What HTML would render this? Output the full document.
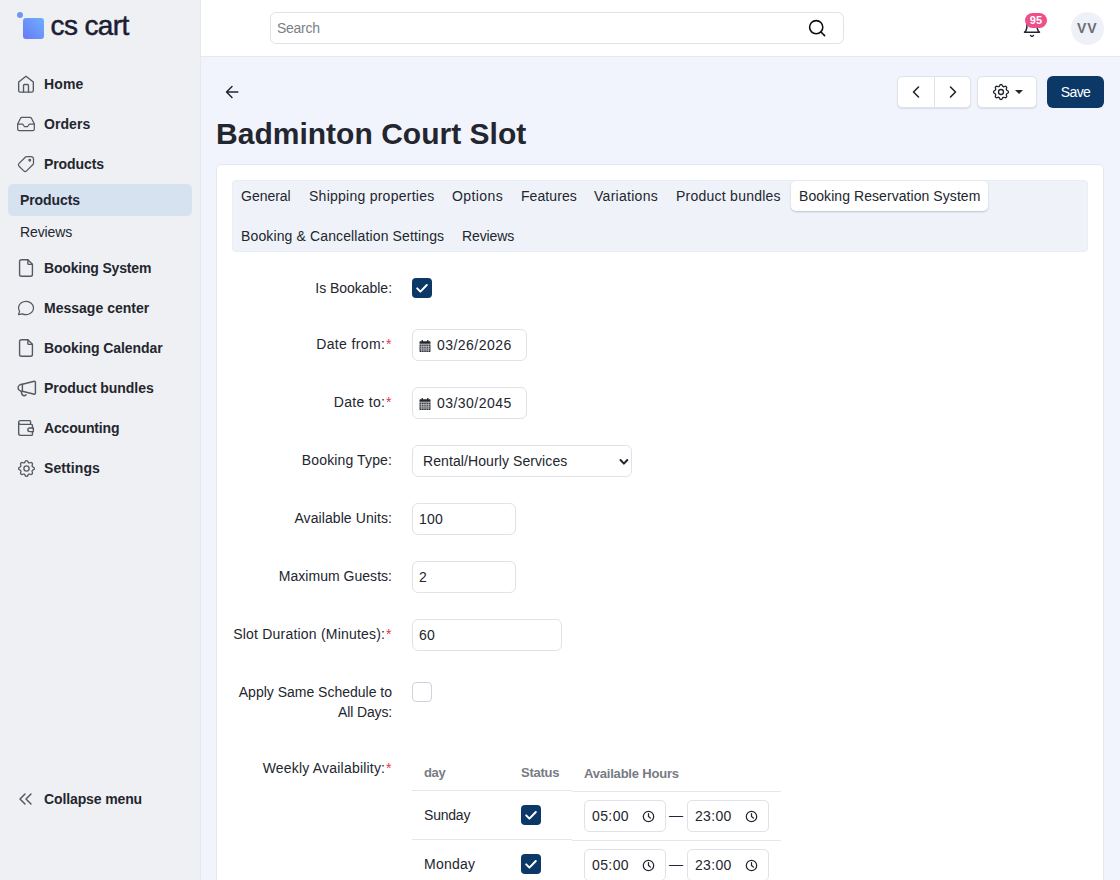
<!DOCTYPE html>
<html lang="en"><head>
<meta charset="utf-8">
<title>Badminton Court Slot</title>
<style>
:root{--f:"Liberation Sans",sans-serif;}
*{box-sizing:border-box;margin:0;padding:0}
html,body{width:1120px;height:880px;overflow:hidden}
body{font-family:var(--f);font-size:14px;color:#1f2430;background:#f1f4fc;position:relative}
.abs{position:absolute;white-space:nowrap}
/* sidebar */
#side{position:absolute;left:0;top:0;width:201px;height:880px;background:#eff0f3;border-right:1px solid #e6e8ed}
#logo-dot{position:absolute;left:17px;top:11.5px;width:6px;height:6px;border-radius:50%;background:#6f97f6}
#logo-sq{position:absolute;left:23px;top:18px;width:21px;height:20.5px;border-radius:3px;background:linear-gradient(45deg,#6b78f8,#6bb1fc)}
#logo-t{position:absolute;left:50.5px;top:8.5px;font-size:28px;line-height:34px;color:#1b1e33;white-space:nowrap;-webkit-text-stroke:0.5px #1b1e33}
.mi{position:absolute;left:44px;font-weight:bold;font-size:14px;line-height:20px;color:#23262e;white-space:nowrap}
.ms{position:absolute;left:20px;font-size:14px;line-height:20px;color:#23262e;white-space:nowrap}
.ic{position:absolute;left:16px;width:20px;height:20px;fill:none;stroke:#555960;stroke-width:1.5;stroke-linecap:round;stroke-linejoin:round}
#act{position:absolute;left:8px;top:184px;width:184px;height:32px;border-radius:5px;background:#d6e2f0}
/* header */
#head{position:absolute;left:201px;top:0;width:919px;height:57px;background:#fff;border-bottom:1px solid #e6e8ec}
#search{position:absolute;left:270px;top:12px;width:574px;height:32px;border:1px solid #dfe2e8;border-radius:6px;background:#fff}
#search span{position:absolute;left:6px;top:5px;font-size:14px;line-height:20px;color:#7a7f87}

/* header right */
#bell{position:absolute;left:1021.850px;top:18.300px;width:20px;height:20px;fill:none;stroke:#23262e;stroke-width:1.8;stroke-linecap:round;stroke-linejoin:round}
#badge{position:absolute;left:1025px;top:13px;width:22px;height:15px;border-radius:7.500px;background:#ee4f8b;color:#fff;font-size:11px;font-weight:bold;line-height:15px;text-align:center}
#avatar{position:absolute;left:1070.700px;top:11.500px;width:33px;height:33px;border-radius:50%;background:#eef1f7;color:#6a6e76;font-weight:bold;font-size:14px;line-height:33px;text-align:center}
#sicon{position:absolute;left:806px;top:17px;width:22px;height:22px;fill:none;stroke:#0c0d10;stroke-width:1.55;stroke-linecap:round}
/* toolbar */
.btn{position:absolute;top:76px;height:31.500px;background:#fff;border:1px solid #dfe3ea;border-radius:5px;box-shadow:0 1px 1px rgba(30,50,90,.12)}
#save{position:absolute;left:1047px;top:76px;width:57px;height:32px;border-radius:6px;background:#0b3866;color:#fff;font-size:14px;line-height:32px;text-align:center}
#title{position:absolute;left:216px;top:113px;font-size:30px;font-weight:bold;line-height:42px;color:#23262e;white-space:nowrap}
/* card */
#card{position:absolute;left:216px;top:164px;width:888px;height:740px;background:#fff;border:1px solid #e4e7ed;border-radius:5px}
#tabs{position:absolute;left:232px;top:180px;width:856px;height:72px;background:#eff3f9;border:1px solid #e9edf4;border-radius:4px}
.tab{position:absolute;font-size:14px;line-height:20px;color:#23262e;white-space:nowrap}
#tabact{position:absolute;left:791px;top:181px;width:197px;height:30px;background:#fff;border-radius:5px;box-shadow:0 1px 2px rgba(40,70,120,.28)}
.lbl{position:absolute;right:728px;font-size:14px;line-height:20px;color:#23262e;white-space:nowrap;text-align:right}
.lbl i{font-style:normal;color:#e0364c;display:inline-block;width:6.800px;text-align:center}
.inp{position:absolute;left:412px;height:32px;border:1px solid #dfe2e8;border-radius:6px;background:#fff;font-size:14px;line-height:30px;color:#23262e;padding-left:6px;white-space:nowrap}
.cb{position:absolute;width:20px;height:20px;border-radius:4px;background:#0b3866}
.cb svg{position:absolute;left:0;top:0;width:20px;height:20px;fill:none;stroke:#fff;stroke-width:2;stroke-linecap:round;stroke-linejoin:round}
.cb0{position:absolute;width:20px;height:20px;border-radius:4px;background:#fff;border:1px solid #ced3de}
.th{position:absolute;font-size:13px;line-height:18px;color:#777b83;font-weight:bold;white-space:nowrap}
.td{position:absolute;font-size:14px;line-height:20px;color:#23262e;white-space:nowrap}
.hl{position:absolute;height:1px;background:#e3e6eb}
.tm{position:absolute;width:82px;height:32px;border:1px solid #dfe2e8;border-radius:5px;background:#fff;font-size:14px;line-height:30px;color:#23262e;padding-left:7px}
.tm svg{position:absolute;left:56.800px;top:8.500px;width:13px;height:13px;fill:none;stroke:#23262e;stroke-width:1.35;stroke-linecap:round}
</style>
</head>
<body>
<div id="side">
  <div id="logo-dot"></div><div id="logo-sq"></div><div id="logo-t" style="letter-spacing: -0.61px;">cs cart</div>
  <div id="act"></div>
<svg class="ic" style="top:73px;left:15px;width:22px;height:22px" viewBox="0 0 24 24"><path d="M4 9.8l8-6.3 8 6.3V19a1.8 1.8 0 0 1-1.8 1.800H5.800A1.8 1.8 0 0 1 4 19z"></path><path d="M9.300 20.800V13.500a1 1 0 0 1 1-1h3.400a1 1 0 0 1 1 1v7.300"></path></svg>
<svg class="ic" style="top:114px" viewBox="0 0 24 24"><path d="M22 12h-6l-2 3h-4l-2-3H2"></path><path d="M5.450 5.110L2 12v6a2 2 0 0 0 2 2h16a2 2 0 0 0 2-2v-6l-3.450-6.890A2 2 0 0 0 16.760 4H7.240a2 2 0 0 0-1.790 1.110z"></path></svg>
<svg class="ic" style="top:154px" viewBox="0 0 24 24"><g transform="translate(24 0) scale(-1 1)"><circle cx="7.500" cy="7.500" r="1"></circle><path d="M3 6v5.172a2 2 0 0 0 .586 1.414l7.710 7.710a2.410 2.410 0 0 0 3.408 0l5.592-5.592a2.410 2.410 0 0 0 0-3.408l-7.710-7.710a2 2 0 0 0-1.414-.586h-5.172a3 3 0 0 0-3 3z"></path></g></svg>
<svg class="ic" style="top:257px;left:15px;width:22px;height:22px" viewBox="0 0 24 24"><path d="M14 3v4a1 1 0 0 0 1 1h4"></path><path d="M17 21h-10a2 2 0 0 1-2-2v-14a2 2 0 0 1 2-2h7l5 5v11a2 2 0 0 1-2 2z"></path></svg>
<svg class="ic" style="top:298px" viewBox="0 0 24 24"><path d="M3 20l1.300-3.900c-2.324-3.437-1.426-7.872 2.100-10.374c3.526-2.501 8.590-2.296 11.845.480c3.255 2.777 3.695 7.266 1.029 10.501c-2.666 3.235-7.615 4.215-11.574 2.293l-4.700 1"></path></svg>
<svg class="ic" style="top:337px;left:15px;width:22px;height:22px" viewBox="0 0 24 24"><path d="M14 3v4a1 1 0 0 0 1 1h4"></path><path d="M17 21h-10a2 2 0 0 1-2-2v-14a2 2 0 0 1 2-2h7l5 5v11a2 2 0 0 1-2 2z"></path></svg>
<svg class="ic" style="top:376.500px;left:14.500px;width:23px;height:23px" viewBox="0 0 24 24"><path d="M7.700 7.550L20.100 4.500a1 1 0 0 1 1.200.970v11.500a1 1 0 0 1-1.200.970L7.700 14.850z"></path><path d="M7.700 7.550a4.500 3.650 0 0 0 0 7.300"></path><path d="M6.600 15.200c.300 2.500 1.200 4.100 2.600 4.300c1 .100 1.800-.300 2.400-1"></path></svg>
<svg class="ic" style="top:417px;left:15px;width:22px;height:22px" viewBox="0 0 24 24"><path d="M17 8v-3a1 1 0 0 0-1-1h-10a2 2 0 0 0 0 4h12a1 1 0 0 1 1 1v3m0 4v3a1 1 0 0 1-1 1h-12a2 2 0 0 1-2-2v-12"></path><path d="M20 12v4h-4a2 2 0 0 1 0-4h4"></path></svg>
<svg class="ic" style="top:457.500px;left:15.500px;width:21px;height:21px" viewBox="0 0 24 24"><path d="M10.325 4.317c.426-1.756 2.924-1.756 3.35 0a1.724 1.724 0 0 0 2.573 1.066c1.543-.94 3.31.826 2.37 2.37a1.724 1.724 0 0 0 1.065 2.572c1.756.426 1.756 2.924 0 3.35a1.724 1.724 0 0 0-1.066 2.573c.94 1.543-.826 3.31-2.37 2.37a1.724 1.724 0 0 0-2.572 1.065c-.426 1.756-2.924 1.756-3.35 0a1.724 1.724 0 0 0-2.573-1.066c-1.543.94-3.31-.826-2.37-2.37a1.724 1.724 0 0 0-1.065-2.572c-1.756-.426-1.756-2.924 0-3.35a1.724 1.724 0 0 0 1.066-2.573c-.94-1.543.826-3.31 2.37-2.37c1 .608 2.296.07 2.572-1.065z"></path><circle cx="12" cy="12" r="3"></circle></svg>
<svg class="ic" style="top:787.100px;left:14px;width:24px;height:24px" viewBox="0 0 24 24"><path d="M11 7l-5 5l5 5"></path><path d="M17 7l-5 5l5 5"></path></svg>

  <div class="mi" style="top: 74px; letter-spacing: 0.118px;">Home</div>
  <div class="mi" style="top: 114px; letter-spacing: 0.056px;">Orders</div>
  <div class="mi" style="top: 154px; letter-spacing: -0.082px;">Products</div>
  <div class="ms" style="top: 190px; font-weight: bold; letter-spacing: -0.082px;">Products</div>
  <div class="ms" style="top: 222px; letter-spacing: -0.101px;">Reviews</div>
  <div class="mi" style="top: 258px; letter-spacing: -0.181px;">Booking System</div>
  <div class="mi" style="top: 298px; letter-spacing: 0.012px;">Message center</div>
  <div class="mi" style="top: 338px; letter-spacing: -0.079px;">Booking Calendar</div>
  <div class="mi" style="top: 378px; letter-spacing: -0.054px;">Product bundles</div>
  <div class="mi" style="top: 418px; letter-spacing: -0.163px;">Accounting</div>
  <div class="mi" style="top: 458px; letter-spacing: 0.092px;">Settings</div>
  <div class="mi" style="top: 789px; letter-spacing: -0.12px;">Collapse menu</div>
</div>
<div id="head"></div>
<div id="search"><span style="letter-spacing: -0.264px;">Search</span></div>

<svg id="sicon" viewBox="0 0 22 22"><circle cx="10.2" cy="10.2" r="6.6"></circle><path d="M15 15l3.6 3.6"></path></svg>
<svg id="bell" viewBox="0 0 24 24"><path d="M6 8a6 6 0 0 1 12 0c0 7 3 9 3 9H3s3-2 3-9"></path><path d="M10.300 21a1.940 1.940 0 0 0 3.400 0"></path></svg>
<div id="badge" style="letter-spacing: 0.192px;">95</div>
<div id="avatar" style="letter-spacing: 0.882px;">VV</div>

<svg class="abs" style="left:222px;top:82px;width:20px;height:20px;fill:none;stroke:#23262e;stroke-width:1.5;stroke-linecap:round;stroke-linejoin:round" viewBox="0 0 20 20"><path d="M4.5 10h11.3M4.5 10l5.5-5.5M4.5 10l5.5 5.5"></path></svg>

<div class="btn" style="left:897px;width:74px"><div style="position:absolute;left:36px;top:0;width:1px;height:30px;background:#dfe3ea"></div>
<svg style="position:absolute;left:7.500px;top:4.800px;width:20px;height:20px;fill:none;stroke:#23262e;stroke-width:1.6;stroke-linecap:round;stroke-linejoin:round" viewBox="0 0 20 20"><path d="M12.500 5l-5 5 5 5"></path></svg>
<svg style="position:absolute;left:44.500px;top:4.800px;width:20px;height:20px;fill:none;stroke:#23262e;stroke-width:1.6;stroke-linecap:round;stroke-linejoin:round" viewBox="0 0 20 20"><path d="M7.500 5l5 5-5 5"></path></svg>
</div>
<div class="btn" style="left:977px;width:59.500px">
<svg style="position:absolute;left:12.900px;top:4.800px;width:20px;height:20px;fill:none;stroke:#23262e;stroke-width:1.6;stroke-linecap:round;stroke-linejoin:round" viewBox="0 0 24 24"><path d="M10.325 4.317c.426-1.756 2.924-1.756 3.35 0a1.724 1.724 0 0 0 2.573 1.066c1.543-.94 3.31.826 2.37 2.37a1.724 1.724 0 0 0 1.065 2.572c1.756.426 1.756 2.924 0 3.35a1.724 1.724 0 0 0-1.066 2.573c.94 1.543-.826 3.31-2.37 2.37a1.724 1.724 0 0 0-2.572 1.065c-.426 1.756-2.924 1.756-3.35 0a1.724 1.724 0 0 0-2.573-1.066c-1.543.94-3.31-.826-2.37-2.37a1.724 1.724 0 0 0-1.065-2.572c-1.756-.426-1.756-2.924 0-3.35a1.724 1.724 0 0 0 1.066-2.573c-.94-1.543.826-3.31 2.37-2.37c1 .608 2.296.07 2.572-1.065z"></path><circle cx="12" cy="12" r="3"></circle></svg>
<div style="position:absolute;left:37.200px;top:13px;width:0;height:0;border-left:4.300px solid transparent;border-right:4.300px solid transparent;border-top:4.600px solid #23262e"></div>
</div>
<div id="save" style="letter-spacing: -0.587px;">Save</div>
<div id="title" style="letter-spacing: 0.015px;">Badminton Court Slot</div>

<div id="card"></div>
<div id="tabs"></div>
<div id="tabact"></div>
<div class="tab" style="left: 241px; top: 186px; letter-spacing: -0.013px;">General</div>
<div class="tab" style="left: 309px; top: 186px; letter-spacing: 0.254px;">Shipping properties</div>
<div class="tab" style="left: 452px; top: 186px; letter-spacing: 0.403px;">Options</div>
<div class="tab" style="left: 521px; top: 186px; letter-spacing: 0.07px;">Features</div>
<div class="tab" style="left: 594px; top: 186px; letter-spacing: 0.277px;">Variations</div>
<div class="tab" style="left: 676px; top: 186px; letter-spacing: 0.245px;">Product bundles</div>
<div class="tab" style="left: 799px; top: 186px; letter-spacing: 0.064px;">Booking Reservation System</div>
<div class="tab" style="left: 241px; top: 226px; letter-spacing: 0.127px;">Booking &amp; Cancellation Settings</div>
<div class="tab" style="left: 462px; top: 226px; letter-spacing: -0.101px;">Reviews</div>

<div class="lbl" style="top:278px"><span style="letter-spacing: -0.03px;">Is Bookable:</span></div>
<div class="cb" style="left:412px;top:278px"><svg viewBox="0 0 20 20"><path d="M5.2 10.4l3.2 3.2 6.4-6.6"></path></svg></div>
<div class="lbl" style="top:334px"><span style="letter-spacing: 0.364px;">Date from:</span><i>*</i></div>
<div class="inp" style="top: 329px; width: 115px; padding-left: 24px; letter-spacing: 0.466px;"><svg style="position:absolute;left:6px;top:10px;width:12px;height:12px" viewBox="0 0 12 12"><path fill="#23262e" d="M2.600 0h1.300v1.200h4.200V0h1.300v1.200h1.400a.7.700 0 0 1 .700.700v1.900H.500V1.900a.7.700 0 0 1 .700-.700h1.400zM.500 4.600h11v6.700a.7.700 0 0 1-.700.700H1.200a.7.700 0 0 1-.700-.700z"></path><path stroke="#fff" stroke-width=".55" fill="none" d="M.500 6.400h11M.500 8.200h11M.500 10h11M2.700 4.600v7.400M4.900 4.600v7.400M7.100 4.600v7.400M9.300 4.600v7.400"></path></svg>03/26/2026</div>
<div class="lbl" style="top:392px"><span style="letter-spacing: 0.305px;">Date to:</span><i>*</i></div>
<div class="inp" style="top: 387px; width: 115px; padding-left: 24px; letter-spacing: 0.466px;"><svg style="position:absolute;left:6px;top:10px;width:12px;height:12px" viewBox="0 0 12 12"><path fill="#23262e" d="M2.600 0h1.300v1.200h4.200V0h1.300v1.200h1.400a.7.700 0 0 1 .700.700v1.900H.500V1.900a.7.700 0 0 1 .700-.700h1.400zM.500 4.600h11v6.700a.7.700 0 0 1-.700.700H1.200a.7.700 0 0 1-.700-.700z"></path><path stroke="#fff" stroke-width=".55" fill="none" d="M.500 6.400h11M.500 8.200h11M.500 10h11M2.700 4.600v7.400M4.900 4.600v7.400M7.100 4.600v7.400M9.300 4.600v7.400"></path></svg>03/30/2045</div>
<div class="lbl" style="top:450px"><span style="letter-spacing: 0.128px;">Booking Type:</span></div>
<div class="inp" style="top: 445px; width: 220px; padding-left: 10px; letter-spacing: 0.09px;">Rental/Hourly Services<svg style="position:absolute;left:205px;top:11px;width:12px;height:10px;fill:none;stroke:#23262e;stroke-width:2;stroke-linecap:round;stroke-linejoin:round" viewBox="0 0 12 10"><path d="M2.500 3l3.400 3.600L9.300 3"></path></svg></div>
<div class="lbl" style="top:508px"><span style="letter-spacing: 0.086px;">Available Units:</span></div>
<div class="inp" style="top: 503px; width: 104px; letter-spacing: 0.249px;">100</div>
<div class="lbl" style="top:566px"><span style="letter-spacing: 0.026px;">Maximum Guests:</span></div>
<div class="inp" style="top: 561px; width: 104px; letter-spacing: 0.244px;">2</div>
<div class="lbl" style="top:624px"><span style="letter-spacing: 0.205px;">Slot Duration (Minutes):</span><i>*</i></div>
<div class="inp" style="top: 619px; width: 150px; letter-spacing: 0.244px;">60</div>
<div class="lbl" style="top:682px"><span style="letter-spacing: -0.004px;">Apply Same Schedule to</span></div>
<div class="lbl" style="top:702px"><span style="letter-spacing: -0.15px;">All Days:</span></div>
<div class="cb0" style="left:412px;top:682px"></div>
<div class="lbl" style="top:758px"><span style="letter-spacing: 0.2px;">Weekly Availability:</span><i>*</i></div>

<div class="th" style="left: 424px; top: 764px; letter-spacing: -0.335px;">day</div>
<div class="th" style="left: 521px; top: 764px; letter-spacing: -0.239px;">Status</div>
<div class="th" style="left: 584px; top: 765px; letter-spacing: -0.199px;">Available Hours</div>
<div class="hl" style="left:412px;top:790px;width:160px"></div>
<div class="hl" style="left:572px;top:791px;width:209px"></div>
<div class="td" style="left: 424px; top: 805px; letter-spacing: -0.21px;">Sunday</div>
<div class="cb" style="left:521px;top:805px"><svg viewBox="0 0 20 20"><path d="M5.2 10.4l3.2 3.2 6.4-6.6"></path></svg></div>
<div class="tm" style="left: 584px; top: 800px; letter-spacing: 0.391px;">05:00<svg viewBox="0 0 14 14"><circle cx="7" cy="7" r="5.6"></circle><path d="M7 3.8V7l2 1.6"></path></svg></div>
<div class="td" style="left:669px;top:805px">—</div>
<div class="tm" style="left: 687px; top: 800px; letter-spacing: 0.311px;">23:00<svg viewBox="0 0 14 14"><circle cx="7" cy="7" r="5.6"></circle><path d="M7 3.8V7l2 1.6"></path></svg></div>
<div class="hl" style="left:412px;top:839px;width:160px"></div>
<div class="hl" style="left:572px;top:840px;width:209px"></div>
<div class="td" style="left: 424px; top: 854px; letter-spacing: 0.255px;">Monday</div>
<div class="cb" style="left:521px;top:854px"><svg viewBox="0 0 20 20"><path d="M5.2 10.4l3.2 3.2 6.4-6.6"></path></svg></div>
<div class="tm" style="left: 584px; top: 849px; letter-spacing: 0.391px;">05:00<svg viewBox="0 0 14 14"><circle cx="7" cy="7" r="5.6"></circle><path d="M7 3.8V7l2 1.6"></path></svg></div>
<div class="td" style="left:669px;top:854px">—</div>
<div class="tm" style="left: 687px; top: 849px; letter-spacing: 0.311px;">23:00<svg viewBox="0 0 14 14"><circle cx="7" cy="7" r="5.6"></circle><path d="M7 3.8V7l2 1.6"></path></svg></div>


</body></html>
